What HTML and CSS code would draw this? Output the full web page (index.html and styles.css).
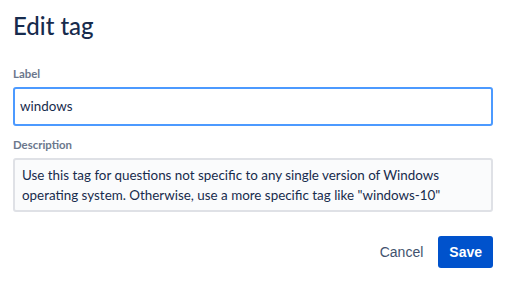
FILE: index.html
```html
<!DOCTYPE html>
<html lang="en">
<head>
  <meta charset="UTF-8" />
  <title>Edit tag</title>
  <link rel="stylesheet" href="styles.css">
</head>
<body>
  <div class="dialog">
    <h1 class="titulo">Edit tag</h1>

    <div class="campo">
      <label class="rotulo">Label</label>
      <div class="entrada">windows</div>
    </div>

    <div class="campo">
      <label class="rotulo">Description</label>
      <div class="area">Use this tag for questions not specific to any single version of Windows operating system. Otherwise, use a more specific tag like "windows-10"</div>
    </div>

    <div class="acoes">
      <button class="botao-cancelar">Cancel</button>
      <button class="botao-salvar">Save</button>
    </div>
  </div>
</body>
</html>
```

FILE: styles.css
```css
body {
  margin: 0;
  background: #fff;
  color: #172b4d;
  font-family: Lato, sans-serif;
}

.dialog {
  width: 480px;
  padding: 10px 0 0 13px;
}

.titulo {
  font-size: 24px;
  font-weight: 500;
  margin: 0 0 24px 0;
  line-height: 32px;
}

.campo {
  margin-bottom: 11px;
}

.rotulo {
  display: block;
  font-size: 11.4px;
  font-weight: 700;
  color: #6b778c;
  line-height: 16px;
  margin-bottom: 5px;
}

.entrada {
  border: 2px solid #4c9aff;
  border-radius: 3px;
  padding: 0 5px;
  height: 35px;
  line-height: 35px;
  font-size: 13.4px;
}

.area {
  background: #fafbfc;
  border: 2px solid #dfe1e6;
  border-radius: 3px;
  padding: 5px 7px;
  font-size: 13.4px;
  line-height: 20px;
}

.acoes {
  display: flex;
  justify-content: flex-end;
  gap: 4px;
  margin-top: 24px;
}

.acoes button {
  font-family: "Liberation Sans", Arial, sans-serif;
  font-size: 14px;
  height: 32px;
  padding: 0 11px;
  border: none;
  border-radius: 3px;
  cursor: pointer;
}

.botao-cancelar {
  background: none;
  color: #42526e;
}

.botao-salvar {
  background: #0052cc;
  color: #fff;
  font-weight: bold;
}
```
